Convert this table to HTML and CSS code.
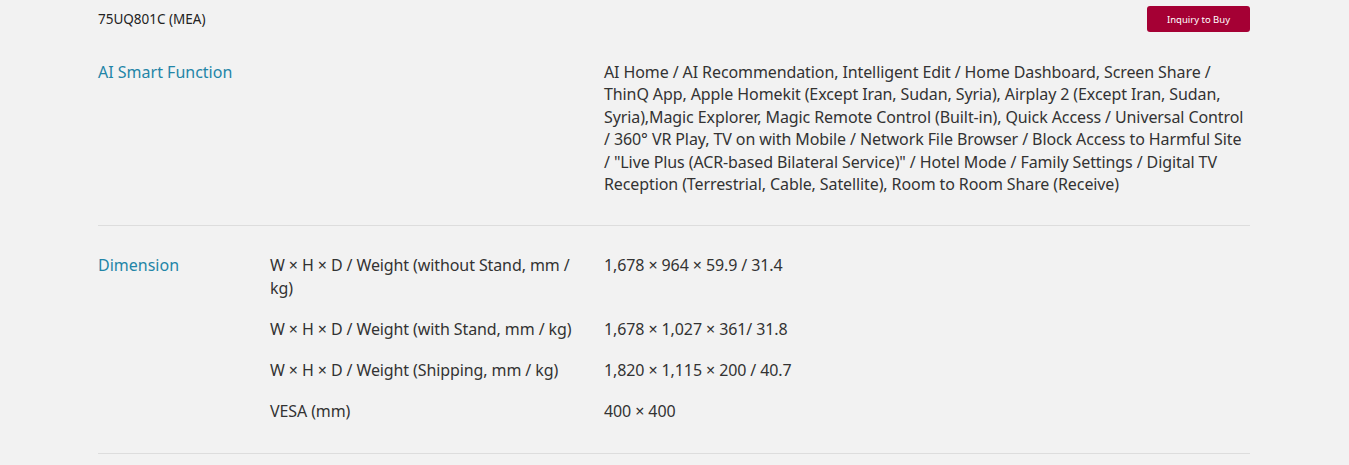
FILE: index.html
```html
<!DOCTYPE html>
<html lang="en">
<head>
  <meta charset="UTF-8">
  <title>75UQ801C (MEA) - Specs</title>
  <link rel="stylesheet" href="styles.css">
</head>
<body>
  <div class="wrap">
    <div class="topbar">
      <span class="model">75UQ801C (MEA)</span>
      <button class="buy-btn">Inquiry to Buy</button>
    </div>

    <div class="spec-row first">
      <div class="spec-title">AI Smart Function</div>
      <div class="spec-list">
        <div class="spec-item">
          <div class="spec-name"></div>
          <div class="spec-value">AI Home / AI Recommendation, Intelligent Edit / Home Dashboard, Screen Share / ThinQ App, Apple Homekit (Except Iran, Sudan, Syria), Airplay 2 (Except Iran, Sudan, Syria),Magic Explorer, Magic Remote Control (Built-in), Quick Access / Universal Control / 360° VR Play, TV on with Mobile / Network File Browser / Block Access to Harmful Site / "Live Plus (ACR-based Bilateral Service)" / Hotel Mode / Family Settings / Digital TV Reception (Terrestrial, Cable, Satellite), Room to Room Share (Receive)</div>
        </div>
      </div>
    </div>

    <div class="spec-row">
      <div class="spec-title">Dimension</div>
      <div class="spec-list">
        <div class="spec-item">
          <div class="spec-name">W × H × D / Weight (without Stand, mm / kg)</div>
          <div class="spec-value">1,678 × 964 × 59.9 / 31.4</div>
        </div>
        <div class="spec-item">
          <div class="spec-name">W × H × D / Weight (with Stand, mm / kg)</div>
          <div class="spec-value">1,678 × 1,027 × 361/ 31.8</div>
        </div>
        <div class="spec-item">
          <div class="spec-name">W × H × D / Weight (Shipping, mm / kg)</div>
          <div class="spec-value">1,820 × 1,115 × 200 / 40.7</div>
        </div>
        <div class="spec-item">
          <div class="spec-name">VESA (mm)</div>
          <div class="spec-value">400 × 400</div>
        </div>
      </div>
    </div>
  </div>
</body>
</html>
```

FILE: styles.css
```css
body {
  margin: 0;
  background: #f2f2f2;
  color: #333;
  font-family: "Noto Sans", "Open Sans", sans-serif;
}

.wrap {
  width: 1152px;
  margin-left: 98px;
}

.topbar {
  display: flex;
  justify-content: space-between;
  align-items: center;
  height: 38px;
}

.model {
  font-size: 13.5px;
  color: #222;
}

.buy-btn {
  background: #a50034;
  color: #fff;
  border: none;
  border-radius: 3px;
  font-family: inherit;
  font-size: 9.5px;
  width: 103px;
  height: 26px;
  cursor: pointer;
}

.spec-row {
  display: flex;
  padding: 28px 0 31px;
  border-bottom: 1px solid #ddd;
}

.spec-row.first {
  padding-top: 23px;
  padding-bottom: 30px;
}

.spec-title {
  width: 172px;
  flex-shrink: 0;
  color: #2385a7;
  font-size: 16px;
  line-height: 22.4px;
}

.spec-list {
  flex: 1;
  display: flex;
  flex-direction: column;
  gap: 18.5px;
}

.spec-item {
  display: flex;
}

.spec-name,
.spec-value {
  font-size: 16px;
  line-height: 22.4px;
  letter-spacing: -0.1px;
}

.spec-name {
  width: 334px;
  flex-shrink: 0;
  padding-right: 16px;
  box-sizing: border-box;
}

.spec-value {
  flex: 1;
}
```
